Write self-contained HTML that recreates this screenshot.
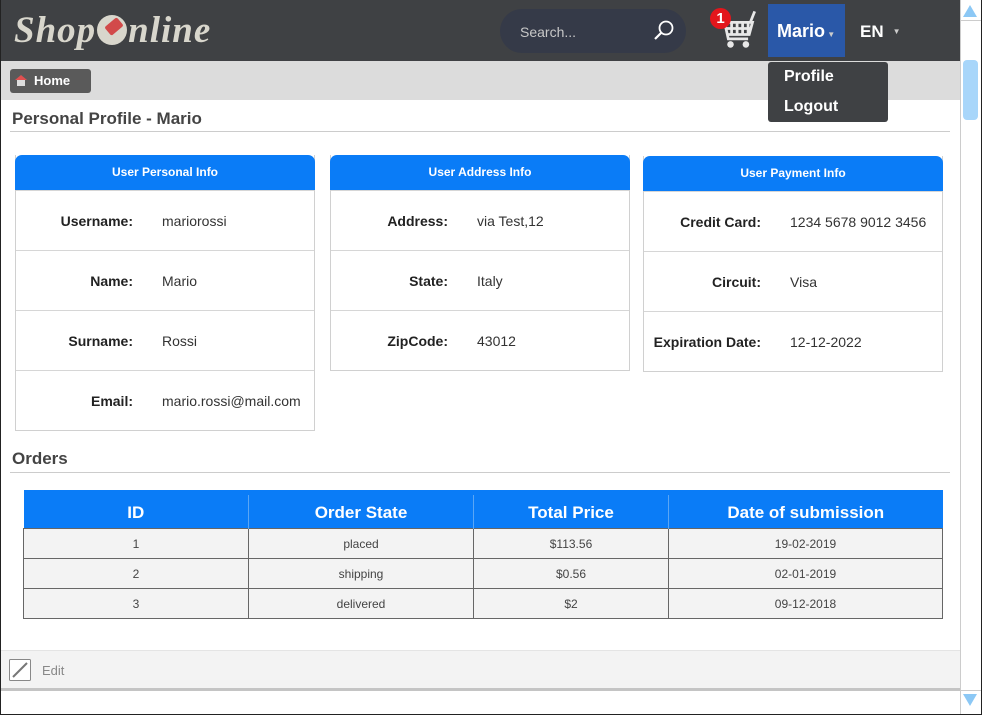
<!DOCTYPE html>
<html><head><style>
*{box-sizing:border-box;margin:0;padding:0}
body{width:982px;height:715px;position:relative;overflow:hidden;background:#fff;font-family:"Liberation Sans",Arial,sans-serif;}
.abs{position:absolute}
#frame{left:0;top:0;width:982px;height:715px;border:1px solid #222;border-top:none;}
#hdr{left:0;top:0;width:960px;height:61px;background:#3f4144;}
#bc{left:0;top:61px;width:960px;height:39px;background:#dcdcdc;}
.card{position:absolute;width:300px;border:1px solid #d0d0d0;border-top:none;background:#fff}
.card .h{height:35px;background:#0a7cf7;color:#fff;font-weight:bold;font-size:12px;text-align:center;line-height:35px;border-radius:7px 7px 0 0;margin:0 -1px}
.row{height:60px;border-top:1px solid #d6d6d6;position:relative;font-size:14px;color:#333}
.row:first-of-type{border-top:none}
.row .l{position:absolute;right:0;top:0;line-height:60px;font-weight:bold;color:#222;text-align:right}
.row .v{position:absolute;top:0;line-height:60px}
table{border-collapse:collapse;position:absolute;left:23px;top:490px;width:920px;border-top:5px solid #0a7cf7}
th{background:#0a7cf7;color:#fff;font-size:17px;height:36px;border-left:1px solid #5aa6f5;font-weight:bold;padding-top:2px}
td{background:#f3f3f3;border:1px solid #666;height:30px;text-align:center;font-size:12px;color:#444}
</style></head><body>
<div class="abs" id="hdr"></div>
<div class="abs" style="left:14px;top:9px;font-family:'Liberation Serif',serif;font-style:italic;font-weight:bold;font-size:37px;color:#d8d6cc;letter-spacing:1px">Shop<span style="display:inline-block;width:30px;height:30px;border-radius:50%;background:#d8d6cc;position:relative;top:3px;margin:0 1px"><span style="position:absolute;left:9px;top:6px;width:16px;height:11px;background:#d24a4a;transform:rotate(-40deg);border-radius:2px"></span></span>nline</div>
<div class="abs" style="left:500px;top:9px;width:186px;height:44px;border-radius:22px;background:#353a48"></div>
<div class="abs" style="left:520px;top:24px;font-size:14px;color:#c8c8c8">Search...</div>
<svg class="abs" style="left:652px;top:19px" width="24" height="24" viewBox="0 0 24 24"><circle cx="14" cy="9" r="6.5" fill="none" stroke="#fff" stroke-width="1.8"/><line x1="9.5" y1="13.5" x2="3" y2="20" stroke="#fff" stroke-width="2.2"/></svg>
<svg class="abs" style="left:714px;top:8px" width="44" height="42" viewBox="0 0 40 38"><path d="M3 10 L9 10 L13 28 L31 28 M10 13 L35 13 L32 24 L12 24 M16 13 V24 M21 13 V24 M26 13 V24 M31 13 V24 M11 18.5 H34 M33 13 L37 3" fill="none" stroke="#e8e8e8" stroke-width="2.5"/><circle cx="15" cy="33" r="3" fill="#e8e8e8"/><circle cx="29" cy="33" r="3" fill="#e8e8e8"/></svg>
<div class="abs" style="left:710px;top:8px;width:21px;height:21px;border-radius:50%;background:#e3161c;color:#fff;font-weight:bold;font-size:15px;text-align:center;line-height:21px">1</div>
<div class="abs" style="left:768px;top:4px;width:77px;height:53px;background:#2a58a8;color:#fff;font-weight:bold;font-size:18px;line-height:55px;padding-left:9px">Mario<span style="font-size:8px;color:#ccc"> ▼</span></div>
<div class="abs" style="left:860px;top:22px;color:#fff;font-weight:bold;font-size:17px">EN<span style="font-size:8px;color:#ccc;margin-left:9px;vertical-align:3px">▼</span></div>
<div class="abs" id="bc"></div>
<div class="abs" style="left:10px;top:69px;width:81px;height:24px;background:#5a5a5a;border-radius:3px;color:#fff;font-weight:bold;font-size:13px;line-height:24px;padding-left:24px">Home</div>
<div class="abs" style="left:15px;top:75px;width:12px;height:11px"><div style="width:0;height:0;border-left:6px solid transparent;border-right:6px solid transparent;border-bottom:5px solid #e05050"></div><div style="width:8px;height:6px;background:#ddd;margin-left:2px"></div></div>
<div class="abs" style="left:768px;top:62px;width:120px;height:60px;background:#3f4144;border-radius:3px;color:#fff;font-weight:bold;font-size:16px;padding-left:16px;line-height:30px">Profile<br>Logout</div>
<div class="abs" style="left:12px;top:109px;font-size:17px;font-weight:bold;color:#444">Personal Profile - Mario</div>
<div class="abs" style="left:10px;top:131px;width:940px;height:1px;background:#ccc"></div>

<div class="card" style="left:15px;top:155px">
<div class="h">User Personal Info</div>
<div class="row"><span class="l" style="right:181px">Username:</span><span class="v" style="left:146px">mariorossi</span></div>
<div class="row"><span class="l" style="right:181px">Name:</span><span class="v" style="left:146px">Mario</span></div>
<div class="row"><span class="l" style="right:181px">Surname:</span><span class="v" style="left:146px">Rossi</span></div>
<div class="row"><span class="l" style="right:181px">Email:</span><span class="v" style="left:146px">mario.rossi@mail.com</span></div>
</div>
<div class="card" style="left:330px;top:155px">
<div class="h">User Address Info</div>
<div class="row"><span class="l" style="right:181px">Address:</span><span class="v" style="left:146px">via Test,12</span></div>
<div class="row"><span class="l" style="right:181px">State:</span><span class="v" style="left:146px">Italy</span></div>
<div class="row"><span class="l" style="right:181px">ZipCode:</span><span class="v" style="left:146px">43012</span></div>
</div>
<div class="card" style="left:643px;top:156px">
<div class="h">User Payment Info</div>
<div class="row"><span class="l" style="right:181px">Credit Card:</span><span class="v" style="left:146px">1234 5678 9012 3456</span></div>
<div class="row"><span class="l" style="right:181px">Circuit:</span><span class="v" style="left:146px">Visa</span></div>
<div class="row"><span class="l" style="right:181px">Expiration Date:</span><span class="v" style="left:146px">12-12-2022</span></div>
</div>

<div class="abs" style="left:12px;top:449px;font-size:17px;font-weight:bold;color:#444">Orders</div>
<div class="abs" style="left:10px;top:472px;width:940px;height:1px;background:#ccc"></div>
<table>
<tr><th style="width:225px;border-left:none">ID</th><th style="width:225px">Order State</th><th style="width:195px">Total Price</th><th>Date of submission</th></tr>
<tr><td>1</td><td>placed</td><td>$113.56</td><td>19-02-2019</td></tr>
<tr><td>2</td><td>shipping</td><td>$0.56</td><td>02-01-2019</td></tr>
<tr><td>3</td><td>delivered</td><td>$2</td><td>09-12-2018</td></tr>
</table>

<div class="abs" style="left:0;top:650px;width:960px;height:41px;background:#f3f3f3;border-top:1px solid #e4e4e4;border-bottom:3px solid #c4c4c4"></div>
<svg class="abs" style="left:9px;top:659px" width="23" height="23"><rect x="0.5" y="0.5" width="21" height="21" rx="1" fill="#fff" stroke="#888"/><line x1="4" y1="18" x2="18" y2="4" stroke="#777" stroke-width="2"/></svg>
<div class="abs" style="left:42px;top:663px;font-size:13px;color:#888">Edit</div>

<div class="abs" style="left:960px;top:0;width:22px;height:715px;background:#fff;border-left:1px solid #ccc"></div>
<div class="abs" style="left:960px;top:20px;width:21px;height:1px;background:#ccc"></div>
<div class="abs" style="left:963px;top:5px;width:0;height:0;border-left:7px solid transparent;border-right:7px solid transparent;border-bottom:12px solid #8cc8f5"></div>
<div class="abs" style="left:963px;top:60px;width:15px;height:60px;background:#a8d6fa;border-radius:4px"></div>
<div class="abs" style="left:960px;top:690px;width:21px;height:1px;background:#ccc"></div>
<div class="abs" style="left:963px;top:694px;width:0;height:0;border-left:7px solid transparent;border-right:7px solid transparent;border-top:12px solid #8cc8f5"></div>
<div class="abs" id="frame"></div>
</body></html>
